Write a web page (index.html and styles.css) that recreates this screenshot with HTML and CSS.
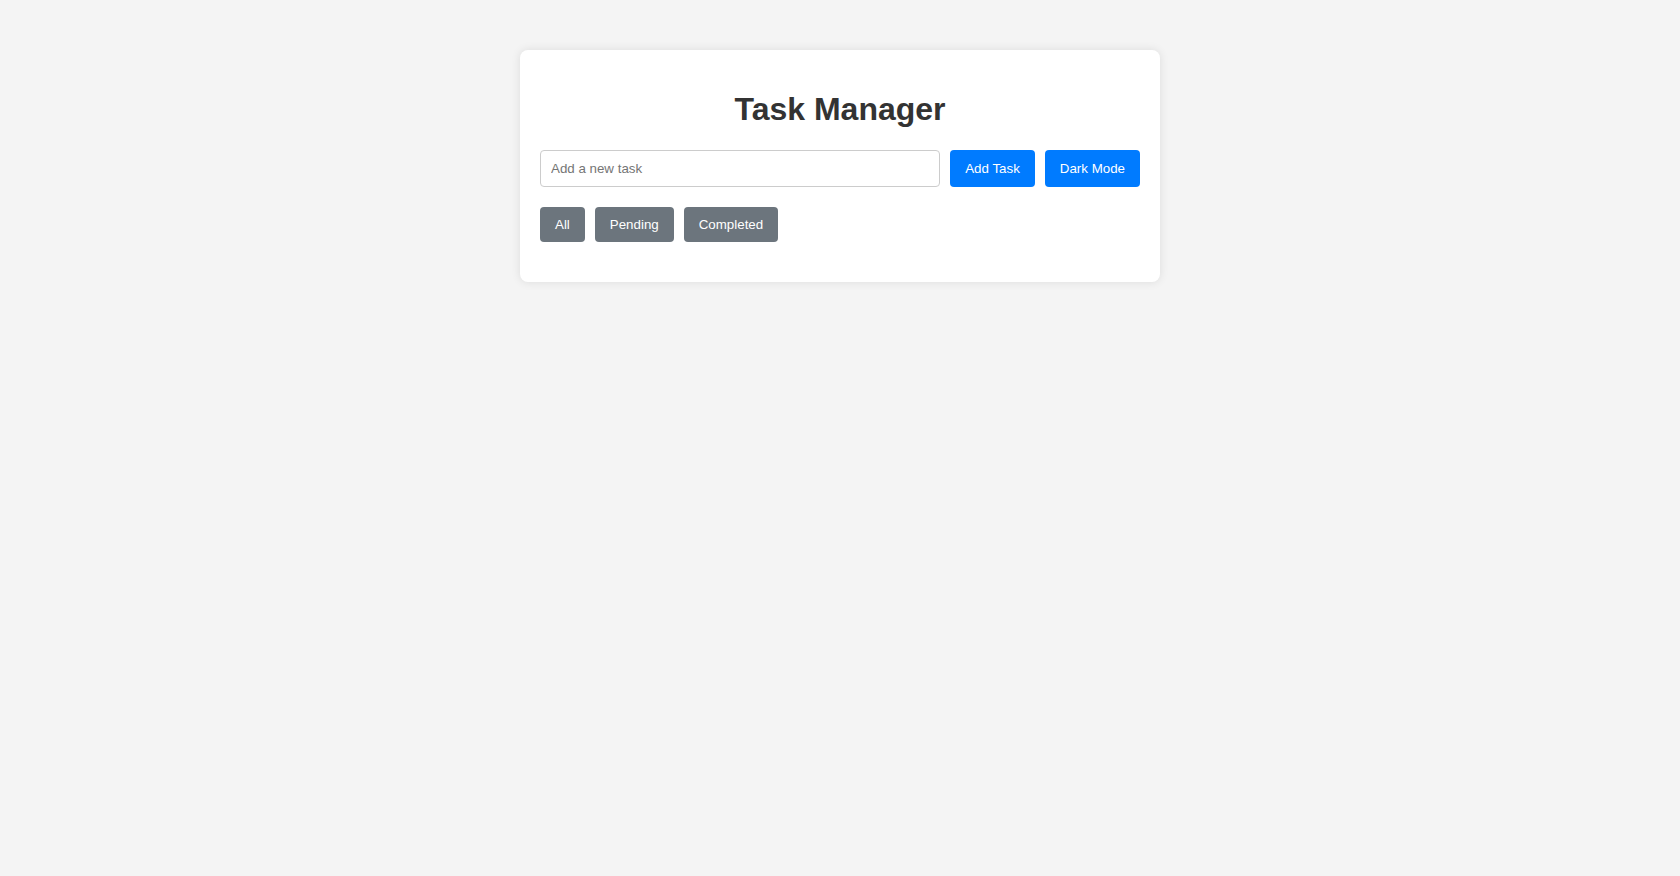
FILE: index.html
```html
<!DOCTYPE html>
<html lang="en">
<head>
    <meta charset="UTF-8">
    <meta name="viewport" content="width=device-width, initial-scale=1.0">
    <title>Task Manager</title>
    <link rel="stylesheet" href="styles.css">
</head>
<body>
    <div class="container">
        <h1>Task Manager</h1>
        <div class="task-input">
            <input type="text" id="taskInput" placeholder="Add a new task">
            <button class="btn-primary" id="addTask">Add Task</button>
            <button class="btn-primary" id="toggleDark">Dark Mode</button>
        </div>
        <div class="filters">
            <button class="btn-filter">All</button>
            <button class="btn-filter">Pending</button>
            <button class="btn-filter">Completed</button>
        </div>
        <ul id="taskList" class="task-list"></ul>
    </div>
</body>
</html>
```

FILE: styles.css
```css
body {
    font-family: Arial, "Liberation Sans", sans-serif;
    background-color: #f4f4f4;
    margin: 0;
    padding: 0;
    color: #333;
}
.container {
    background: white;
    max-width: 600px;
    margin: 50px auto;
    padding: 20px;
    border-radius: 8px;
    box-shadow: 0 0 10px rgba(0, 0, 0, 0.1);
}
h1 {
    text-align: center;
    color: #333;
    font-size: 32px;
    margin: 21px 0 22px;
}
.task-input {
    display: flex;
    gap: 10px;
    margin-bottom: 20px;
}
input {
    flex: 1;
    padding: 10px;
    font-family: Arial, "Liberation Sans", sans-serif;
    font-size: 13.33px;
    border: 1px solid #ccc;
    border-radius: 4px;
}
button {
    padding: 10px 15px;
    font-family: Arial, "Liberation Sans", sans-serif;
    font-size: 13.33px;
    color: white;
    border: none;
    border-radius: 4px;
    cursor: pointer;
}
.btn-primary {
    background-color: #007bff;
}
.btn-primary:hover {
    background-color: #0056b3;
}
.filters {
    display: flex;
    gap: 10px;
}
.btn-filter {
    background-color: #6c757d;
}
.task-list {
    list-style: none;
    padding: 0;
    margin: 20px 0 0;
}
```
